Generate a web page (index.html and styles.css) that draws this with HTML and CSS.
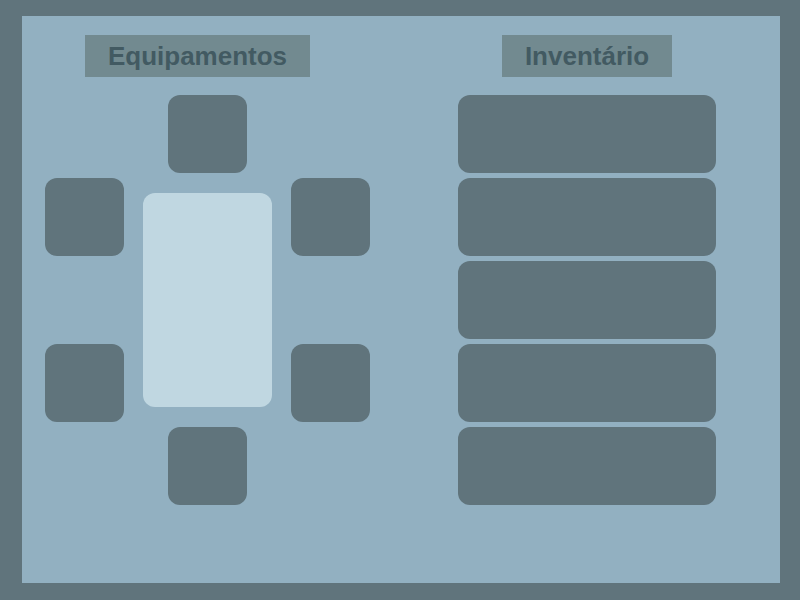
FILE: index.html
```html
<!DOCTYPE html>
<html lang="pt-BR">
<head>
  <meta charset="utf-8">
  <meta name="viewport" content="width=device-width, initial-scale=1">
  <title>Equipamentos e Inventário</title>
  <link rel="stylesheet" href="styles.css">
</head>
<body>
  <main class="panel">
    <section class="column equipment">
      <h2 class="title">Equipamentos</h2>
      <div class="equipment-grid">
        <div class="slot slot-head"></div>
        <div class="slot slot-upper-left"></div>
        <div class="character"></div>
        <div class="slot slot-upper-right"></div>
        <div class="slot slot-lower-left"></div>
        <div class="slot slot-lower-right"></div>
        <div class="slot slot-feet"></div>
      </div>
    </section>
    <section class="column inventory">
      <h2 class="title">Inventário</h2>
      <div class="inventory-list">
        <div class="slot"></div>
        <div class="slot"></div>
        <div class="slot"></div>
        <div class="slot"></div>
        <div class="slot"></div>
      </div>
    </section>
  </main>
</body>
</html>
```
FILE: styles.css
```css
* {
  box-sizing: border-box;
}

body {
  display: flex;
  min-height: 100vh;
  margin: 0;
  padding: 16px 20px 17px 22px;
  background: #60747c;
  font-family: "Liberation Sans", Arial, sans-serif;
}

.panel {
  flex: 1;
  display: grid;
  grid-template-columns: 325fr 258fr;
  column-gap: 88px;
  padding: 19px 64px 19px 23px;
  background: #92b0c1;
}

.column {
  display: flex;
  flex-direction: column;
  gap: 18px;
}

.title {
  align-self: center;
  margin: 0;
  padding: 0 23px;
  background: #728a90;
  color: #425a62;
  font-size: 26px;
  font-weight: 700;
  line-height: 42px;
}

.equipment .title {
  margin-right: 20px;
}

.equipment-grid {
  display: grid;
  grid-template-columns: 79fr 129fr 79fr;
  grid-template-rows: repeat(5, 78px);
  gap: 5px 19px;
}

.slot {
  border-radius: 12px;
  background: #60747c;
}

.slot-head,
.slot-feet {
  grid-column: 2;
  justify-self: center;
  width: 79px;
}

.slot-head {
  grid-row: 1;
}

.slot-feet {
  grid-row: 5;
}

.slot-upper-left {
  grid-area: 2 / 1;
}

.slot-upper-right {
  grid-area: 2 / 3;
}

.slot-lower-left {
  grid-area: 4 / 1;
}

.slot-lower-right {
  grid-area: 4 / 3;
}

.character {
  grid-area: 2 / 2 / 5 / 3;
  margin: 15px 0;
  border-radius: 12px;
  background: #c0d7e1;
}

.inventory-list {
  display: grid;
  grid-auto-rows: 78px;
  gap: 5px;
}
```
